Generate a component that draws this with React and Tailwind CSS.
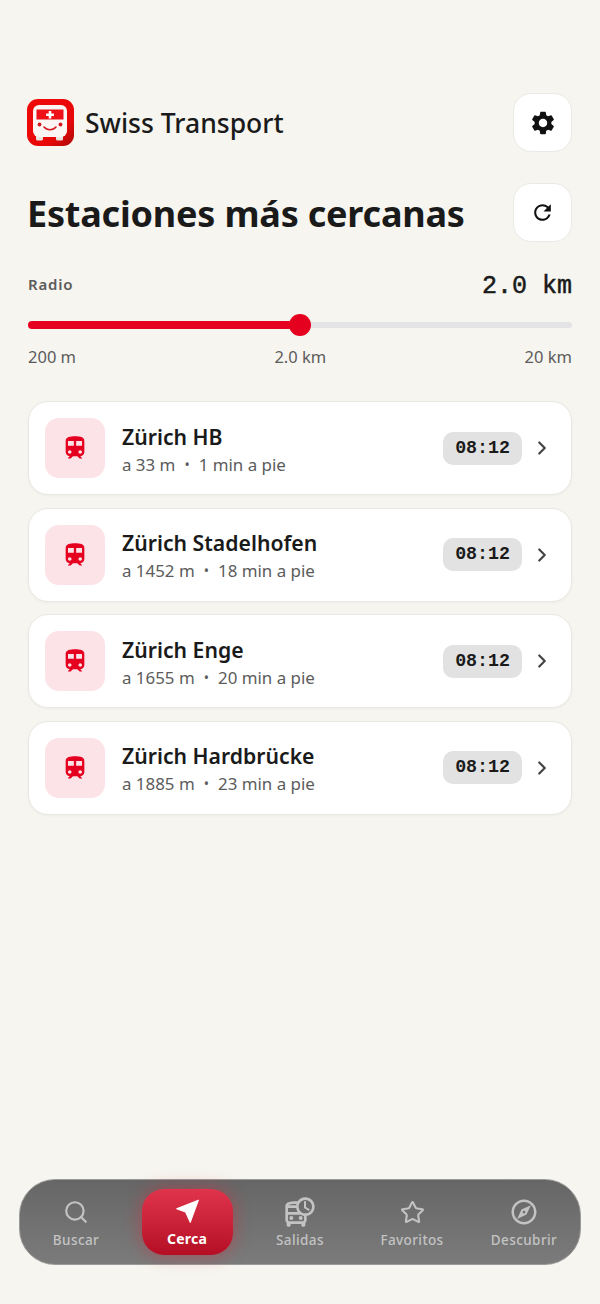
import React from 'react';
import { MdSettings, MdRefresh, MdTrain, MdOutlineDepartureBoard, MdOutlineExplore } from 'react-icons/md';
import { Search, ChevronRight, Star } from 'lucide-react';

const stations = [
  { name: 'Zürich HB', dist: 'a 33 m', walk: '1 min a pie' },
  { name: 'Zürich Stadelhofen', dist: 'a 1452 m', walk: '18 min a pie' },
  { name: 'Zürich Enge', dist: 'a 1655 m', walk: '20 min a pie' },
  { name: 'Zürich Hardbrücke', dist: 'a 1885 m', walk: '23 min a pie' },
];

function Logo() {
  return (
    <svg width="47" height="47" viewBox="0 0 47 47" className="mb-[1px] shrink-0">
      <defs>
        <linearGradient id="logoBg" x1="0" y1="0" x2="1" y2="1">
          <stop offset="0" stopColor="#f00a0a" />
          <stop offset="0.7" stopColor="#e80808" />
          <stop offset="1" stopColor="#a80808" />
        </linearGradient>
      </defs>
      <rect width="47" height="47" rx="11" fill="url(#logoBg)" />
      <rect x="9" y="35" width="7" height="6.5" rx="1.5" fill="#e8e4e0" />
      <rect x="29" y="35" width="7" height="6.5" rx="1.5" fill="#e8e4e0" />
      <rect x="6" y="6" width="34" height="32" rx="6" fill="#fbf6f4" />
      <rect x="9.5" y="10.5" width="27" height="10" fill="#ee1118" />
      <path d="M21.7 12h2.6v2.5h2.6v2.4h-2.6v2.5h-2.6v-2.5h-2.6v-2.4h2.6z" fill="#fff" />
      <circle cx="12.5" cy="25.5" r="1.9" fill="#d8141c" />
      <circle cx="33.5" cy="25.5" r="1.9" fill="#d8141c" />
      <path d="M17 28c3 3.6 9 3.6 12 0" fill="none" stroke="#d8141c" strokeWidth="1.6" strokeLinecap="round" />
    </svg>
  );
}

function NavArrow() {
  return (
    <svg width="26" height="26" viewBox="0 0 24 24" fill="#fff" stroke="#fff" strokeWidth="1" strokeLinejoin="round">
      <path d="M22.5 2 2.5 10l8.2 3 4.3 9.5z" />
    </svg>
  );
}

function IconButton({ children }) {
  return (
    <button className="flex h-[59px] w-[59px] shrink-0 items-center justify-center rounded-[18px] border border-[#ebe9e5] bg-white text-[#111]">
      {children}
    </button>
  );
}

function StationCard({ station }) {
  return (
    <div className="flex h-[94px] items-center rounded-[20px] border border-[#e9e8e3] bg-white pl-[16px] pr-[18px] shadow-[0_1px_3px_rgba(0,0,0,0.04)]">
      <div className="flex h-[60px] w-[60px] shrink-0 items-center justify-center rounded-[14px] bg-[#fce3e7]">
        <MdTrain size={28} className="text-[#e6001f]" />
      </div>
      <div className="ml-[17px] min-w-0 flex-1 pt-[3px]">
        <div className="text-[21.2px] leading-[28px] font-semibold text-[#1a1a1a]">{station.name}</div>
        <div className="mt-[2px] flex items-center text-[16.9px] leading-[24px] text-[#5c5c5c]">
          <span>{station.dist}</span>
          <span className="mx-[9px] text-[14px]">•</span>
          <span>{station.walk}</span>
        </div>
      </div>
      <div className="rounded-[10px] bg-[#e2e2e2] px-[12px] py-[4px] font-['Liberation_Mono',monospace] text-[18.3px] leading-[25px] font-bold text-[#1a1a1a]">
        08:12
      </div>
      <ChevronRight size={22} strokeWidth={2.4} className="ml-[9px] text-[#444]" />
    </div>
  );
}

function NavItem({ icon, label }) {
  return (
    <div className="flex flex-col items-center text-[#c3c3c3]">
      <div className="flex h-[32px] items-center justify-center">{icon}</div>
      <span className="mt-[4px] text-[13.5px] leading-[16px] font-medium tracking-[0.4px]">{label}</span>
    </div>
  );
}

export default function App() {
  return (
    <div className="flex h-[1304px] w-[600px] flex-col bg-[#f6f5ef] font-['Noto_Sans',sans-serif]">
      <div className="px-[28px] pt-[93px]">
        <header className="flex items-center justify-between">
          <div className="-ml-[1px] flex items-center gap-[11px]">
            <Logo />
            <span className="mt-[3px] text-[26.5px] font-medium text-[#1a1a1a]">Swiss Transport</span>
          </div>
          <IconButton><MdSettings size={28} /></IconButton>
        </header>

        <div className="mt-[31px] flex items-center justify-between">
          <h1 className="-ml-[1px] pt-[2px] text-[36px] leading-[46px] font-bold tracking-[-0.2px] text-[#1a1a1a]">Estaciones más cercanas</h1>
          <IconButton><MdRefresh size={25} /></IconButton>
        </div>

        <div className="mt-[28px]">
          <div className="flex items-center justify-between">
            <span className="mb-[5px] text-[15px] font-semibold tracking-[0.8px] text-[#5c5c5c]">Radio</span>
            <span className="font-['Liberation_Mono',monospace] text-[25px] leading-[34px] text-[#1a1a1a] [-webkit-text-stroke:0.5px_#1a1a1a]">2.0 km</span>
          </div>
          <div className="relative mt-[9px] flex h-[24px] items-center">
            <div className="h-[6px] w-full rounded-full bg-[#e4e4e7]" />
            <div className="absolute top-[8px] left-0 h-[8px] w-[272px] rounded-full bg-[#e6001f]" />
            <div className="absolute top-[1px] left-[261px] h-[22px] w-[22px] rounded-full bg-[#e6001f]" />
          </div>
          <div className="mt-[8px] flex items-center justify-between text-[16.5px] leading-[24px] text-[#5c5c5c]">
            <span>200 m</span>
            <span>2.0 km</span>
            <span>20 km</span>
          </div>
        </div>

        <div className="mt-[32px] flex flex-col gap-[12.5px]">
          {stations.map((s) => (
            <StationCard key={s.name} station={s} />
          ))}
        </div>
      </div>

      <nav className="mx-[19px] mt-auto mb-[39px] grid h-[86px] grid-cols-5 items-center rounded-[36px] border border-[#9a9a9a] bg-gradient-to-b from-[#666666] to-[#7b7b7b]">
        <NavItem label="Buscar" icon={<Search size={26} strokeWidth={2} />} />
        <div className="mx-auto -translate-x-[1px] flex h-[66px] w-[91px] flex-col items-center rounded-[22px] bg-gradient-to-b from-[#e0334c] to-[#b50d24] pt-[9px] text-white shadow-[0_0_18px_rgba(226,30,50,0.45)]">
          <NavArrow />
          <span className="mt-[7px] text-[14px] leading-[16px] font-bold tracking-[0.2px]">Cerca</span>
        </div>
        <NavItem label="Salidas" icon={<MdOutlineDepartureBoard size={32} />} />
        <NavItem label="Favoritos" icon={<Star size={25} strokeWidth={2} />} />
        <NavItem label="Descubrir" icon={<MdOutlineExplore size={30} />} />
      </nav>
    </div>
  );
}
